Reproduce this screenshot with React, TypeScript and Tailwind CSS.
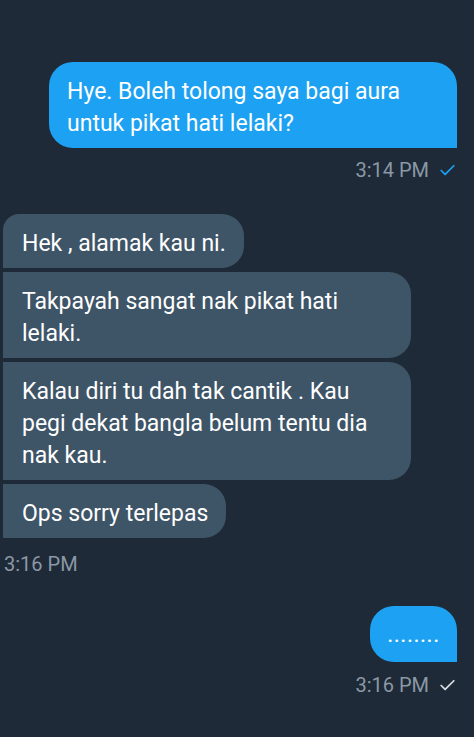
import { Check } from "lucide-react";

type Bubble = { text: React.ReactNode; className: string };

const received: Bubble[] = [
  { text: "Hek , alamak kau ni.", className: "rounded-tl-[16px] w-[241px]" },
  {
    text: (
      <>
        Takpayah sangat nak pikat hati
        <br />
        lelaki.
      </>
    ),
    className: "w-[408px]",
  },
  {
    text: (
      <>
        Kalau diri tu dah tak cantik . Kau
        <br />
        pegi dekat bangla belum tentu dia
        <br />
        nak kau.
      </>
    ),
    className: "w-[408px]",
  },
  { text: "Ops sorry terlepas", className: "w-[223px]" },
];

export default function App() {
  return (
    <div
      className="min-h-[737px] w-[474px] bg-[#1e2a37] pt-[62px] text-white"
      style={{ fontFamily: "Roboto, 'Noto Sans', sans-serif" }}
    >
      {/* sent */}
      <div className="flex flex-col items-end pr-[17px]">
        <div className="w-[408px] whitespace-nowrap rounded-[24px] rounded-br-none bg-[#1da1f2] px-[18px] pb-[8px] pt-[14px] text-[23px] leading-[32px]">
          Hye. Boleh tolong saya bagi aura
          <br />
          untuk pikat hati lelaki?
        </div>
        <div className="mt-[10px] flex items-center gap-[9px] text-[20px] leading-[24px] text-[#8b98a5]">
          <span>3:14 PM</span>
          <Check className="h-[19px] w-[19px] text-[#1da1f2]" strokeWidth={2.2} />
        </div>
      </div>

      {/* received */}
      <div className="mt-[32px] flex flex-col items-start gap-[4px] pl-[3px]">
        {received.map((b, i) => (
          <div
            key={i}
            className={`whitespace-nowrap rounded-r-[22px] bg-[#3e5467] px-[19px] pb-[8px] pt-[14px] text-[23px] leading-[32px] ${b.className}`}
          >
            {b.text}
          </div>
        ))}
        <div className="mt-[10px] pl-[1px] text-[20px] leading-[24px] text-[#8b98a5]">3:16 PM</div>
      </div>

      {/* sent dots */}
      <div className="mt-[30px] flex flex-col items-end pr-[17px]">
        <div className="flex h-[56px] w-[87px] items-center justify-center rounded-[24px] rounded-br-none bg-[#1da1f2] pt-[2px] text-[23px] leading-[32px] tracking-[0.5px]">
          ........
        </div>
        <div className="mt-[11px] flex items-center gap-[9px] text-[20px] leading-[24px] text-[#8b98a5]">
          <span>3:16 PM</span>
          <Check className="h-[19px] w-[19px] text-[#d9dee3]" strokeWidth={2.2} />
        </div>
      </div>
    </div>
  );
}
